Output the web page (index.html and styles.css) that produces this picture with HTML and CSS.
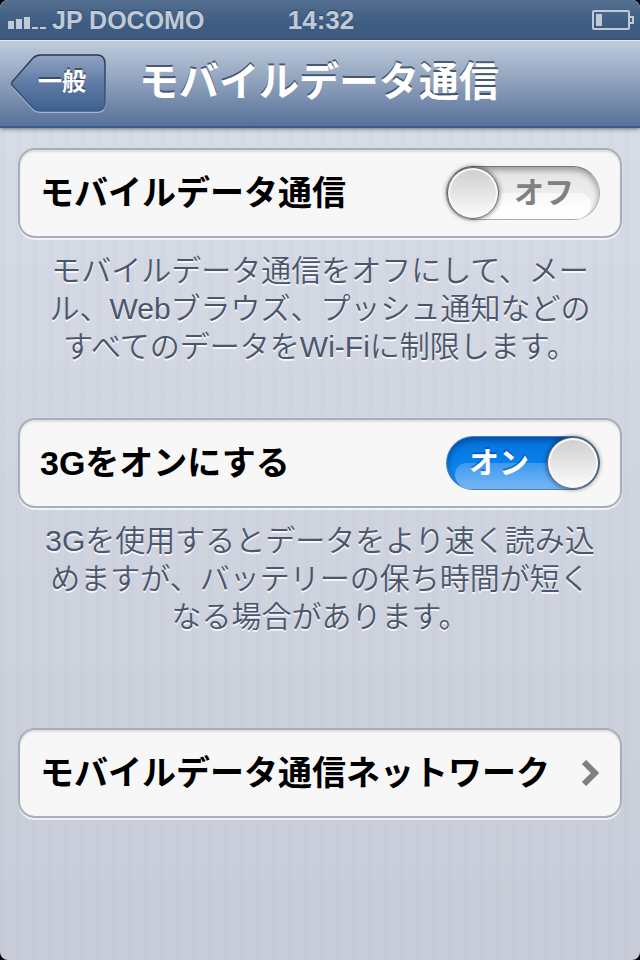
FILE: index.html
```html
<!DOCTYPE html>
<html lang="ja">

<head>
    <meta charset="UTF-8">
    <meta name="viewport" content="width=device-width, initial-scale=1.0">
    <title>モバイルデータ通信</title>
    <link rel="stylesheet" href="styles.css">
</head>

<body>
    <div class="screen">
        <div class="status-bar">
            <div class="carrier">
                <svg class="signal" width="38" height="14" viewBox="0 0 38 14" aria-hidden="true">
                    <path d="M0 5h6v8H0zM8 3h6v10H8zM16 1h6v12h-6zM24 11h6v2h-6zM32 11h6v2h-6z" fill="#c0cad6"/>
                </svg>
                <span>JP DOCOMO</span>
            </div>
            <span class="clock">14:32</span>
            <svg class="battery" width="42" height="20" viewBox="0 0 42 20" aria-hidden="true">
                <rect x="1" y="1" width="36" height="18" rx="1" fill="none" stroke="#c0cad6" stroke-width="2"/>
                <rect x="4" y="4" width="6" height="12" fill="#c0cad6"/>
                <path d="M38 7h3v6h-3" fill="none" stroke="#c0cad6" stroke-width="2"/>
            </svg>
        </div>

        <header class="nav-bar">
            <a class="back" href="#">
                <svg class="back-shape" width="98" height="60" viewBox="0 0 98 60" aria-hidden="true">
                    <defs>
                        <linearGradient id="backFill" x1="0" y1="0" x2="0" y2="1">
                            <stop offset="0" stop-color="#91a4c2"/>
                            <stop offset="0.5" stop-color="#5f7ba5"/>
                            <stop offset="1" stop-color="#3f6190"/>
                        </linearGradient>
                        <linearGradient id="backLine" x1="0" y1="0" x2="0" y2="1">
                            <stop offset="0" stop-color="#2e3947"/>
                            <stop offset="1" stop-color="#3b5a86"/>
                        </linearGradient>
                    </defs>
                    <path d="M31 3H87Q95 3 95 12V49Q95 58 87 58H31Q26 58 23 55L2 32" fill="none" stroke="#a6b7ce" stroke-width="2"/>
                    <path d="M31 1H87Q95 1 95 10V48Q95 57 87 57H31Q26 57 23 54L2 31Q1 30 2 28L23 4Q26 1 31 1Z" fill="url(#backFill)"/>
                    <path d="M31 1H87Q95 1 95 10V48Q95 57 87 57H31Q26 57 23 54L2 31Q1 30 2 28L23 4Q26 1 31 1Z" fill="none" stroke="url(#backLine)" stroke-width="1.5"/>
                </svg>
                <span class="back-text">一般</span>
            </a>
            <h1>モバイルデータ通信</h1>
        </header>

        <main>
            <section>
                <div class="row">
                    <label for="mobileData">モバイルデータ通信</label>
                    <div class="switch">
                        <input type="checkbox" id="mobileData" aria-describedby="mobileDataNote">
                        <span class="on">オン</span>
                        <span class="off">オフ</span>
                    </div>
                </div>
                <p class="note" id="mobileDataNote">モバイルデータ通信をオフにして、メー<br>ル、Webブラウズ、プッシュ通知などの<br>すべてのデータをWi-Fiに制限します。</p>
            </section>

            <section>
                <div class="row">
                    <label for="enable3g">3Gをオンにする</label>
                    <div class="switch">
                        <input type="checkbox" id="enable3g" aria-describedby="enable3gNote" checked>
                        <span class="on">オン</span>
                        <span class="off">オフ</span>
                    </div>
                </div>
                <p class="note" id="enable3gNote">3Gを使用するとデータをより速く読み込<br>めますが、バッテリーの保ち時間が短く<br>なる場合があります。</p>
            </section>

            <section class="network">
                <a class="row" href="#">
                    <span>モバイルデータ通信ネットワーク</span>
                    <svg width="18" height="26" viewBox="0 0 18 26" aria-hidden="true">
                        <path d="M2 2l11 11L2 24" fill="none" stroke="#808080" stroke-width="6"/>
                    </svg>
                </a>
            </section>
        </main>
    </div>
</body>

</html>
```

FILE: styles.css
```css
*,
*::before,
*::after {
    box-sizing: border-box;
}

body {
    margin: 0;
    background-color: #000;
    font-family: "Liberation Sans", "Noto Sans CJK JP", sans-serif;
}

.screen {
    display: flex;
    flex-direction: column;
    min-height: 100vh;
    border-radius: 8px;
    overflow: hidden;
    background: repeating-linear-gradient(90deg, rgba(120, 140, 180, 0.03) 0, rgba(120, 140, 180, 0.03) 6px, transparent 6px, transparent 16px),
        linear-gradient(#d9dee8, #c8ccd8);
}

.status-bar {
    display: grid;
    grid-template-columns: 1fr auto 1fr;
    align-items: center;
    height: 40px;
    padding: 0 6px 0 8px;
    background: linear-gradient(#546f90, #3e5c82 60%, #3e5c82);
    color: #c0cad6;
    font-size: 26px;
    font-weight: bold;
    text-shadow: 0 -1px 1px #2c4565;
}

.carrier {
    display: flex;
    align-items: center;
    gap: 6px;
    font-size: 25px;
}

.signal {
    margin-top: 6px;
}

.battery {
    justify-self: end;
}

.nav-bar {
    display: grid;
    grid-template-columns: 98px 1fr 98px;
    align-items: center;
    height: 88px;
    padding: 0 12px 0 10px;
    border-top: 1px solid #dfe7f0;
    border-bottom: 2px solid #3b5a86;
    background: linear-gradient(#bfccdd, #8d9fbb 50%, #577199);
    box-shadow: 0 1px 4px rgba(0, 0, 0, 0.5);
    color: #fff;
    text-shadow: 0 -2px 0 rgba(50, 65, 85, 0.8);
}

.back {
    display: grid;
    align-items: center;
    color: #fff;
    font-size: 24px;
    font-weight: bold;
    line-height: 56px;
    text-decoration: none;
}

.back-shape,
.back-text {
    grid-area: 1 / 1;
}

.back-text {
    padding: 0 0 4px 28px;
}

h1 {
    margin: 0;
    padding-bottom: 4px;
    font-size: 40px;
    line-height: 60px;
    text-align: center;
    white-space: nowrap;
}

main {
    padding: 20px 18px;
}

.row {
    display: flex;
    align-items: center;
    justify-content: space-between;
    height: 90px;
    padding: 0 20px;
    border: 2px solid #a9afba;
    border-radius: 17px;
    background-color: #f7f7f7;
    box-shadow: 0 2px 0 rgba(255, 255, 255, 0.7), inset 0 2px 2px rgba(0, 0, 0, 0.1);
    color: #000;
    font-size: 34px;
    font-weight: bold;
    line-height: 40px;
    text-decoration: none;
}

.note {
    margin: 0;
    padding: 14px 0 52px;
    color: #4c566c;
    font-size: 30px;
    font-weight: 350;
    line-height: 38px;
    text-align: center;
    text-shadow: 0 2px 0 rgba(255, 255, 255, 0.8);
}

.network {
    padding-top: 40px;
}

/* switch */
.switch {
    display: grid;
    align-items: center;
    width: 154px;
}

.switch input,
.switch span {
    grid-area: 1 / 1;
}

.switch input {
    appearance: none;
    position: relative;
    display: flex;
    width: 154px;
    height: 54px;
    margin: 0;
    border: 1px solid #aaa;
    border-top-color: #777;
    border-radius: 27px;
    background: linear-gradient(#e4e4e4, #ececec 50%, #fcfcfc);
    box-shadow: inset 0 3px 6px rgba(0, 0, 0, 0.35);
    cursor: pointer;
}

/* knob */
.switch input::before {
    content: "";
    width: 52px;
    height: 52px;
    border: 1px solid #666;
    border-radius: 50%;
    background: linear-gradient(#cecece, #fcfcfc);
    box-shadow: inset 0 0 0 2px #fafafa, 0 0 5px rgba(0, 0, 0, 0.6);
    z-index: 1;
}

/* gloss on the lower half */
.switch input::after {
    content: "";
    position: absolute;
    inset: 26px 8px 0;
    border-radius: 16px 16px 20px 20px;
    background: linear-gradient(rgba(255, 255, 255, 0.6), rgba(255, 255, 255, 0.9));
}

.switch input:checked {
    justify-content: flex-end;
    border-color: #4683c4;
    background: linear-gradient(#0873dc, #0880ec 50%, #2f90f0);
    box-shadow: inset 0 3px 6px rgba(0, 40, 110, 0.6);
}

.switch input:checked::after {
    background: linear-gradient(rgba(255, 255, 255, 0.2), rgba(255, 255, 255, 0.35));
}

.switch span {
    font-size: 30px;
    pointer-events: none;
    z-index: 1;
}

.on {
    display: none;
    padding-left: 23px;
    color: #fff;
    text-shadow: 0 -2px 0 rgba(0, 60, 130, 0.5);
}

.off {
    padding-left: 68px;
    color: #808080;
}

.switch input:checked ~ .on {
    display: block;
}

.switch input:checked ~ .off {
    display: none;
}
```
